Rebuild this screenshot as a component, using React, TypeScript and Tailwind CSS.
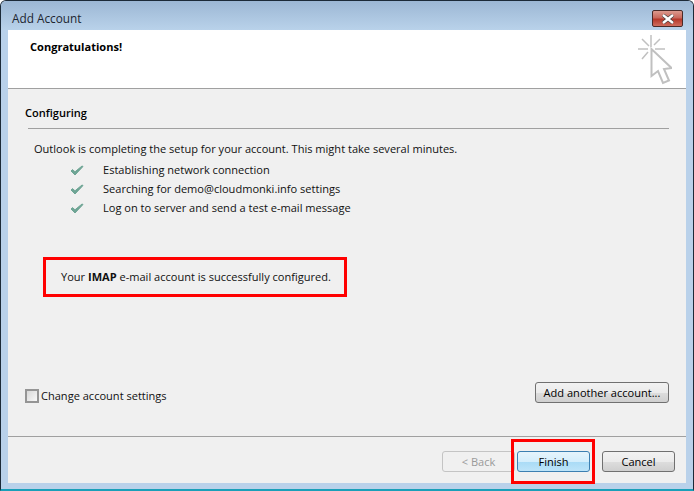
const rows = [
  "Establishing network connection",
  "Searching for demo@cloudmonki.info settings",
  "Log on to server and send a test e-mail message",
];

function Check() {
  return (
    <svg width="14" height="11" viewBox="0 0 14 11" className="shrink-0 -ml-px">
      <path d="M1 6 L5 10 L13 1.5 L12 1 L5 6.8 L2.5 4.6 Z" fill="#6fa595" stroke="#6fa595" strokeWidth="1" />
    </svg>
  );
}

function ClickIcon() {
  return (
    <svg width="34" height="50" viewBox="0 0 34 50" className="absolute right-[14px] top-[5px]" fill="none">
      <g stroke="#c0c0c0" strokeWidth="1.5">
        <path d="M13 0 V12 M0 14 H10 M17 14 H27 M4 4 L11 11 M22 4 L16 10 M4 24 L10 17" />
        <path d="M13.5 14 V41 L20 36 L25 48 L31 45.5 L26 34 L33.5 33 Z" fill="#ffffff" strokeWidth="2" />
      </g>
    </svg>
  );
}

function Btn({ label, disabled, active, w = "w-[73px]" }: { label: string; disabled?: boolean; active?: boolean; w?: string }) {
  const look = disabled
    ? "border-[#c4c4c4] text-[#9a9a9a] bg-[#f0f0f0]"
    : active
      ? "border-[#3c7fb1] text-black bg-[linear-gradient(#e6f4fc_0%,#d4eefc_50%,#a9dbf6_52%,#bde4f9_100%)]"
      : "border-[#707070] text-black bg-[linear-gradient(#f2f2f2_0%,#ebebeb_50%,#dddddd_52%,#cfcfcf_100%)]";
  return (
    <div className={`h-[21px] ${w} flex items-center justify-center rounded-[3px] border ${look}`}>{label}</div>
  );
}

export default function App() {
  return (
    <div className="relative w-[694px] h-[491px] flex flex-col overflow-hidden rounded-t-[6px] border border-b-2 border-[#1c2a38] border-b-[#1a9fb8] bg-[#b9d1ea] font-['Open_Sans','Noto_Sans',sans-serif] text-[11.05px] leading-[16px] text-[#111]">
      <div className="h-[29px] shrink-0 flex items-start justify-between pl-[11px] pr-[10px] bg-[linear-gradient(#9cb7d4,#b9d2ea)]">
        <span className="mt-[9px] text-[11.8px] text-[#1c2530]">Add Account</span>
        <div className="mt-[9px] w-[31px] h-[17px] flex items-center justify-center rounded-[2px] border border-[#4a2a28] bg-[linear-gradient(#dc9a8e_0%,#c9685c_45%,#b5382a_55%,#cf6d5e_100%)]">
          <svg width="14" height="10" viewBox="0 0 14 10">
            <path d="M2 1 L12 9 M12 1 L2 9" stroke="#3d3d3d" strokeWidth="3.6" />
            <path d="M2 1 L12 9 M12 1 L2 9" stroke="#ffffff" strokeWidth="2.4" />
          </svg>
        </div>
      </div>

      <div className="mx-[7px] h-[453px] shrink-0 flex flex-col bg-[#f0f0f0]">
        <div className="relative h-[59px] shrink-0 pl-[22px] pt-[9px] bg-white border-b border-[#a0a0a0]">
          <span className="font-bold text-black">Congratulations!</span>
          <ClickIcon />
        </div>

        <div className="flex-1 flex flex-col pl-[17px] pr-[17px]">
          <div className="mt-[16px] font-semibold text-black">Configuring</div>
          <div className="mt-[7px] ml-[3px] h-px bg-[#a0a0a0]" />
          <div className="mt-[12px] ml-[9px]">Outlook is completing the setup for your account. This might take several minutes.</div>
          <div className="mt-[5px] ml-[46px] flex flex-col gap-[3px]">
            {rows.map((r) => (
              <div key={r} className="flex items-center gap-[19px]">
                <Check />
                <span>{r}</span>
              </div>
            ))}
          </div>
          <div className="mt-[41px] ml-[18px] w-[304px] h-[40px] flex items-center pl-[15px] border-[3px] border-[#ff0000]">
            <span>
              Your <b>IMAP</b> e-mail account is successfully configured.
            </span>
          </div>
          <div className="mt-[84px] flex items-center justify-between">
            <div className="flex items-center gap-[2px] mt-[7px]">
              <div className="w-[14px] h-[14px] border-2 border-[#959595] bg-[linear-gradient(135deg,#d8d8d8,#f8f8f8)]" />
              <span>Change account settings</span>
            </div>
            <Btn label="Add another account..." w="w-[134px]" />
          </div>
        </div>

        <div className="h-px bg-[#a0a0a0]" />
        <div className="h-[46px] shrink-0 flex items-start justify-end gap-[12px] pt-[14px] pr-[11px]">
          <div className="flex gap-[2px]">
            <Btn label="< Back" disabled />
            <Btn label="Finish" active />
          </div>
          <Btn label="Cancel" />
        </div>
      </div>

      <div className="absolute left-[510px] top-[438px] w-[84px] h-[45px] border-[3px] border-[#ff0000]" />
    </div>
  );
}
